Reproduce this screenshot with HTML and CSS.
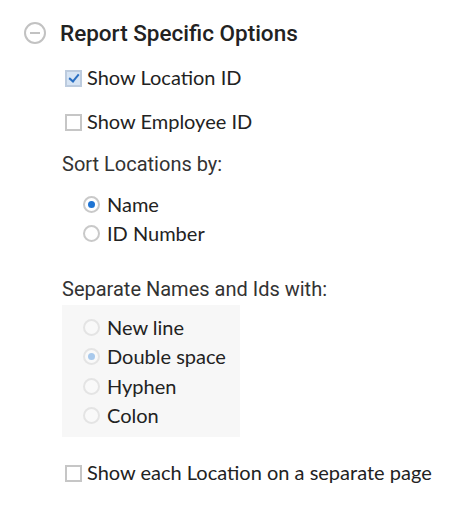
FILE: index.html
```html
<!DOCTYPE html>
<html lang="en">
<head>
    <meta charset="UTF-8">
    <meta name="viewport" content="width=device-width, initial-scale=1.0">
    <title>Report Specific Options</title>
    <link rel="stylesheet" href="styles.css">
</head>
<body>
    <div class="panel">
        <div class="panel-header">
            <svg class="collapse-icon" width="22" height="22" viewBox="0 0 22 22">
                <circle cx="11" cy="11" r="10" fill="none" stroke="#c2c2c2" stroke-width="2"/>
                <line x1="6" y1="11" x2="16" y2="11" stroke="#c2c2c2" stroke-width="2"/>
            </svg>
            <h3>Report Specific Options</h3>
        </div>

        <div class="options">
            <label class="check-row first">
                <input type="checkbox" checked>
                <span>Show Location ID</span>
            </label>
            <label class="check-row">
                <input type="checkbox">
                <span>Show Employee ID</span>
            </label>

            <div class="group-label sort-label">Sort Locations by:</div>
            <div class="radio-group">
                <label class="radio-row">
                    <input type="radio" name="sort" checked>
                    <span>Name</span>
                </label>
                <label class="radio-row">
                    <input type="radio" name="sort">
                    <span>ID Number</span>
                </label>
            </div>

            <div class="group-label sep-label">Separate Names and Ids with:</div>
            <div class="radio-group disabled-box">
                <label class="radio-row">
                    <input type="radio" name="sep" disabled>
                    <span>New line</span>
                </label>
                <label class="radio-row">
                    <input type="radio" name="sep" checked disabled>
                    <span>Double space</span>
                </label>
                <label class="radio-row">
                    <input type="radio" name="sep" disabled>
                    <span>Hyphen</span>
                </label>
                <label class="radio-row">
                    <input type="radio" name="sep" disabled>
                    <span>Colon</span>
                </label>
            </div>

            <label class="check-row last">
                <input type="checkbox">
                <span>Show each Location on a separate page</span>
            </label>
        </div>
    </div>
</body>
</html>
```

FILE: styles.css
```css
body {
    margin: 0;
    padding: 0;
    background-color: #ffffff;
    color: #222222;
    font-family: Lato, 'Noto Sans', sans-serif;
}

.panel {
    padding: 21px 0 0 24px;
}

.panel-header {
    display: flex;
    align-items: center;
    gap: 14px;
    height: 24px;
}

.collapse-icon {
    display: block;
}

.panel-header h3 {
    margin: 0;
    font-family: Roboto, 'Liberation Sans', sans-serif;
    font-weight: 500;
    font-size: 22.5px;
    line-height: 24px;
    color: #222222;
}

.options {
    padding-left: 38px;
}

.check-row {
    display: flex;
    align-items: center;
    gap: 5px;
    height: 24px;
    margin-top: 20px;
    padding-left: 3px;
    font-size: 20px;
    color: #222222;
}

.check-row.first {
    margin-top: 20px;
}

.check-row.last {
    margin-top: 23px;
}

.check-row input {
    appearance: none;
    -webkit-appearance: none;
    margin: 2px 0 0 0;
    width: 17px;
    height: 17px;
    border: 2px solid #c6c6c6;
    background: #ffffff;
    box-sizing: border-box;
    position: relative;
}

.check-row input:checked {
    border-color: #bccbde;
    background: #d6e4f4;
}

.check-row input:checked::after {
    content: "";
    position: absolute;
    left: 4px;
    top: 0px;
    width: 4px;
    height: 8px;
    border: solid #2a6fc2;
    border-width: 0 2px 2px 0;
    transform: rotate(40deg);
}

.group-label {
    font-family: Roboto, 'Liberation Sans', sans-serif;
    font-size: 20px;
    line-height: 24px;
    color: #333333;
}

.sort-label {
    margin-top: 19px;
}

.sep-label {
    margin-top: 29px;
}

.radio-group {
    margin-top: 13px;
    padding-left: 21px;
}

.radio-row {
    display: flex;
    align-items: center;
    gap: 7px;
    height: 29.5px;
    font-size: 20px;
    color: #222222;
}

.radio-row input {
    appearance: none;
    -webkit-appearance: none;
    margin: 1px 0 0 0;
    width: 17px;
    height: 17px;
    border-radius: 50%;
    border: 2px solid #c9c9c9;
    background: #ffffff;
    box-sizing: border-box;
    display: grid;
    place-items: center;
}

.radio-row input:checked::after {
    content: "";
    width: 7px;
    height: 7px;
    border-radius: 50%;
    background: #1f74d3;
}

.disabled-box {
    margin-top: 4px;
    width: 157px;
    padding-top: 7px;
    padding-bottom: 7px;
    background: #f7f7f7;
}

.disabled-box .radio-row input {
    border-color: #e4e4e4;
    background: #f9f9f9;
}

.disabled-box .radio-row input:checked::after {
    background: #a8c9ec;
}
```
